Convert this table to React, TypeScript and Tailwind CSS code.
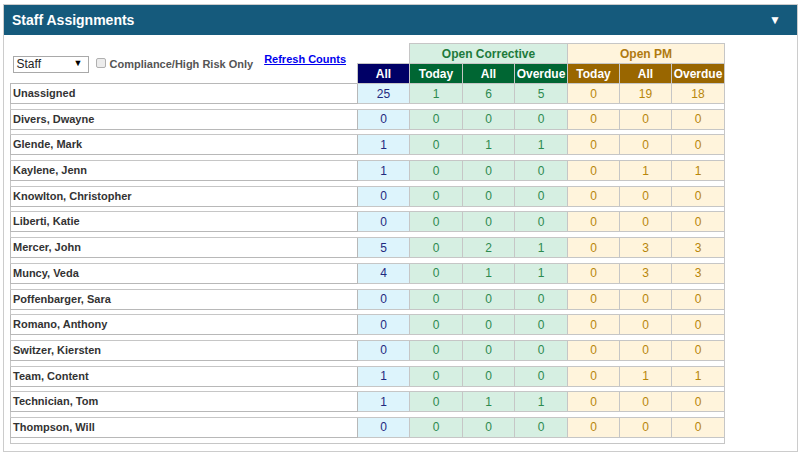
import React from 'react';

interface StaffRow {
  name: string;
  all: number;
  corr: [number, number, number];
  pm: [number, number, number];
}

const rows: StaffRow[] = [
  { name: 'Unassigned', all: 25, corr: [1, 6, 5], pm: [0, 19, 18] },
  { name: 'Divers, Dwayne', all: 0, corr: [0, 0, 0], pm: [0, 0, 0] },
  { name: 'Glende, Mark', all: 1, corr: [0, 1, 1], pm: [0, 0, 0] },
  { name: 'Kaylene, Jenn', all: 1, corr: [0, 0, 0], pm: [0, 1, 1] },
  { name: 'Knowlton, Christopher', all: 0, corr: [0, 0, 0], pm: [0, 0, 0] },
  { name: 'Liberti, Katie', all: 0, corr: [0, 0, 0], pm: [0, 0, 0] },
  { name: 'Mercer, John', all: 5, corr: [0, 2, 1], pm: [0, 3, 3] },
  { name: 'Muncy, Veda', all: 4, corr: [0, 1, 1], pm: [0, 3, 3] },
  { name: 'Poffenbarger, Sara', all: 0, corr: [0, 0, 0], pm: [0, 0, 0] },
  { name: 'Romano, Anthony', all: 0, corr: [0, 0, 0], pm: [0, 0, 0] },
  { name: 'Switzer, Kiersten', all: 0, corr: [0, 0, 0], pm: [0, 0, 0] },
  { name: 'Team, Content', all: 1, corr: [0, 0, 0], pm: [0, 1, 1] },
  { name: 'Technician, Tom', all: 1, corr: [0, 1, 1], pm: [0, 0, 0] },
  { name: 'Thompson, Will', all: 0, corr: [0, 0, 0], pm: [0, 0, 0] },
];

const cell = 'p-0 border border-[#c6c6c6] text-center text-[12px] leading-none';

const Controls = () => (
  <div className="flex items-start pt-[12px] pl-[2px]">
    <div className="w-[76px] h-[17px] border border-[#a9a9a9] bg-white flex items-center justify-between pl-[3px] pr-[5px] text-[12px] text-[#222]">
      <span>Staff</span>
      <span className="text-[9px] text-black">▼</span>
    </div>
    <div className="ml-[7px] mt-[2px] w-[10px] h-[10px] rounded-[2px] border border-[#b0b0b0] bg-[#ececec]" />
    <span className="ml-[4px] mt-[2px] text-[11px] leading-[13px] font-bold text-[#555]">Compliance/High Risk Only</span>
    <a className="ml-[11px] -mt-[3px] text-[11px] leading-[13px] font-bold text-[#0000ee] underline cursor-pointer">Refresh Counts</a>
  </div>
);

export default function App() {
  return (
    <div className="w-[803px] h-[456px] bg-white pt-[4px] pl-[3px]" style={{ fontFamily: '"Liberation Sans", Arial, sans-serif' }}>
      <div className="w-[795px] h-[448px] border border-[#cccccc]">
        <div className="h-[30px] bg-[#155a7c] flex items-center justify-between pl-[8px] pr-[16px]">
          <span className="text-white text-[14px] font-bold">Staff Assignments</span>
          <span className="text-white text-[12px]">▼</span>
        </div>
        <div className="pt-[8px] pl-[6px]">
          <table className="table-fixed border-collapse w-[714px]">
            <colgroup>
              <col className="w-[347px]" />
              <col className="w-[52px]" />
              <col className="w-[53px]" />
              <col className="w-[52px]" />
              <col className="w-[53px]" />
              <col className="w-[52px]" />
              <col className="w-[52px]" />
              <col className="w-[53px]" />
            </colgroup>
            <tbody>
              <tr className="h-[20px]">
                <td rowSpan={2} className="p-0 align-top">
                  <Controls />
                </td>
                <td className="p-0" />
                <td colSpan={3} className={`${cell} bg-[#d6efe2] text-[#1d7a3c] text-[11px] font-bold`}>Open Corrective</td>
                <td colSpan={3} className={`${cell} bg-[#fff4dc] text-[#b07a10] text-[11px] font-bold`}>Open PM</td>
              </tr>
              <tr className="h-[20px]">
                <td className={`${cell} bg-[#000066] text-white text-[11px] font-bold`}>All</td>
                <td className={`${cell} bg-[#006633] text-white text-[11px] font-bold`}>Today</td>
                <td className={`${cell} bg-[#006633] text-white text-[11px] font-bold`}>All</td>
                <td className={`${cell} bg-[#006633] text-white text-[11px] font-bold`}>Overdue</td>
                <td className={`${cell} bg-[#996600] text-white text-[11px] font-bold`}>Today</td>
                <td className={`${cell} bg-[#996600] text-white text-[11px] font-bold`}>All</td>
                <td className={`${cell} bg-[#996600] text-white text-[11px] font-bold`}>Overdue</td>
              </tr>
              {rows.map(r => (
                <React.Fragment key={r.name}>
                  <tr className="h-[20px]">
                    <td className="p-0 pl-[2px] border border-[#b8b8b8] text-[11px] font-bold text-[#333] leading-none">{r.name}</td>
                    <td className={`${cell} bg-[#ddf4fc] text-[#1f2a80]`}>{r.all}</td>
                    {r.corr.map((v, i) => (
                      <td key={'c' + i} className={`${cell} bg-[#d6efe2] text-[#2d8a50]`}>{v}</td>
                    ))}
                    {r.pm.map((v, i) => (
                      <td key={'p' + i} className={`${cell} bg-[#fff4dc] text-[#b8860b]`}>{v}</td>
                    ))}
                  </tr>
                  <tr className="h-[5.7px]">
                    <td colSpan={8} className="p-0 border border-[#c6c6c6] bg-white" />
                  </tr>
                </React.Fragment>
              ))}
            </tbody>
          </table>
        </div>
      </div>
    </div>
  );
}
